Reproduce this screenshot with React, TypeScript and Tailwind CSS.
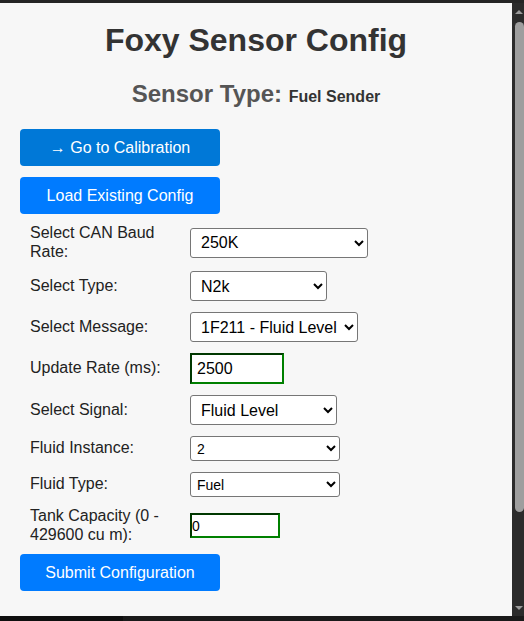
import React from "react";

function Row({
  label,
  children,
  className = "",
}: {
  label: string;
  children: React.ReactNode;
  className?: string;
}) {
  return (
    <div className={"flex items-center pl-[10px] " + className}>
      <label className="w-[150px] mr-[10px] text-[16px] leading-[18.5px] text-[#222]">
        {label}
      </label>
      {children}
    </div>
  );
}

const selectBig =
  "h-[30px] pl-[6px] text-[16px] text-black bg-white border border-[#767676] rounded-[3px]";
const selectSmall =
  "h-[25px] w-[150px] pl-[2px] text-[14px] text-black bg-white border border-[#767676] rounded-[3px]";
const greenInput =
  "bg-white text-black border-2 border-t-[#003800] border-l-[#003800] border-b-[#008000] border-r-[#008000] outline-none";

function App() {
  return (
    <div
      className="h-[621px] w-[524px] flex flex-col bg-[#222] overflow-hidden"
      style={{ fontFamily: '"Liberation Sans", Arial, sans-serif' }}
    >
      <div className="h-[3px] bg-[#252525]" />
      <div className="flex h-[613px]">
        {/* panel */}
        <div className="w-[512px] bg-[#f7f7f7] px-[20px]">
          <h1 className="mt-[19px] text-center text-[32px] leading-[37px] font-bold text-[#333]">
            Foxy Sensor Config
          </h1>
          <h2 className="mt-[21px] text-center text-[24px] leading-[28px] font-bold text-[#555]">
            Sensor Type: <span className="text-[16px] text-[#333]">Fuel Sender</span>
          </h2>

          <button className="mt-[18px] block w-[200px] h-[37px] rounded-[4px] bg-[#0078d7] text-white text-[16px]">
            → Go to Calibration
          </button>
          <button className="mt-[11px] block w-[200px] h-[37px] rounded-[4px] bg-[#007bff] text-white text-[16px]">
            Load Existing Config
          </button>

          <Row label="Select CAN Baud Rate:" className="mt-[10px] h-[37px]">
            <select className={selectBig + " w-[178px]"} defaultValue="250K">
              <option>250K</option>
              <option>500K</option>
              <option>1M</option>
            </select>
          </Row>
          <Row label="Select Type:" className="mt-[10px] h-[30px]">
            <select className={selectBig + " w-[137px]"} defaultValue="N2k">
              <option>N2k</option>
              <option>Custom</option>
            </select>
          </Row>
          <Row label="Select Message:" className="mt-[11px] h-[30px]">
            <select className={selectBig + " w-[168px]"}>
              <option>1F211 - Fluid Level</option>
            </select>
          </Row>
          <Row label="Update Rate (ms):" className="mt-[11px] h-[31px]">
            <input
              className={greenInput + " w-[94px] h-[31px] pl-[5px] text-[16px]"}
              defaultValue="2500"
            />
          </Row>
          <Row label="Select Signal:" className="mt-[11px] h-[30px]">
            <select className={selectBig + " w-[147px]"}>
              <option>Fluid Level</option>
            </select>
          </Row>
          <Row label="Fluid Instance:" className="mt-[11px] h-[25px]">
            <select className={selectSmall}>
              <option>2</option>
            </select>
          </Row>
          <Row label="Fluid Type:" className="mt-[11px] h-[25px]">
            <select className={selectSmall}>
              <option>Fuel</option>
            </select>
          </Row>
          <Row label="Tank Capacity (0 - 429600 cu m):" className="mt-[10px] h-[37px]">
            <input
              className={greenInput + " w-[90px] h-[25px] pl-0 text-[14px]"}
              defaultValue="0"
            />
          </Row>

          <button className="mt-[10px] block w-[200px] h-[37px] rounded-[4px] bg-[#007bff] text-white text-[16px]">
            Submit Configuration
          </button>
        </div>

        {/* scrollbar */}
        <div className="w-[12px] bg-[#2b2b2b] flex flex-col items-end">
          <div className="h-[17px] w-full flex items-center justify-end pr-[1px]">
            <div className="w-0 h-0 border-l-[4px] border-r-[4px] border-b-[4px] border-l-transparent border-r-transparent border-b-[#9a9a9a]" />
          </div>
          <div className="mt-[2px] h-[490px] w-[9px] rounded-t-[5px] rounded-b-[5px] bg-[#9e9e9e]" />
          <div className="flex-1" />
          <div className="h-[17px] w-full flex items-center justify-end pr-[1px]">
            <div className="w-0 h-0 border-l-[4px] border-r-[4px] border-t-[4px] border-l-transparent border-r-transparent border-t-[#9a9a9a]" />
          </div>
        </div>
      </div>
      <div className="flex flex-1">
        <div className="w-[123px] bg-[#0f0f0f]" />
        <div className="flex-1 bg-[#1a1a1a]" />
      </div>
    </div>
  );
}

export default App;
